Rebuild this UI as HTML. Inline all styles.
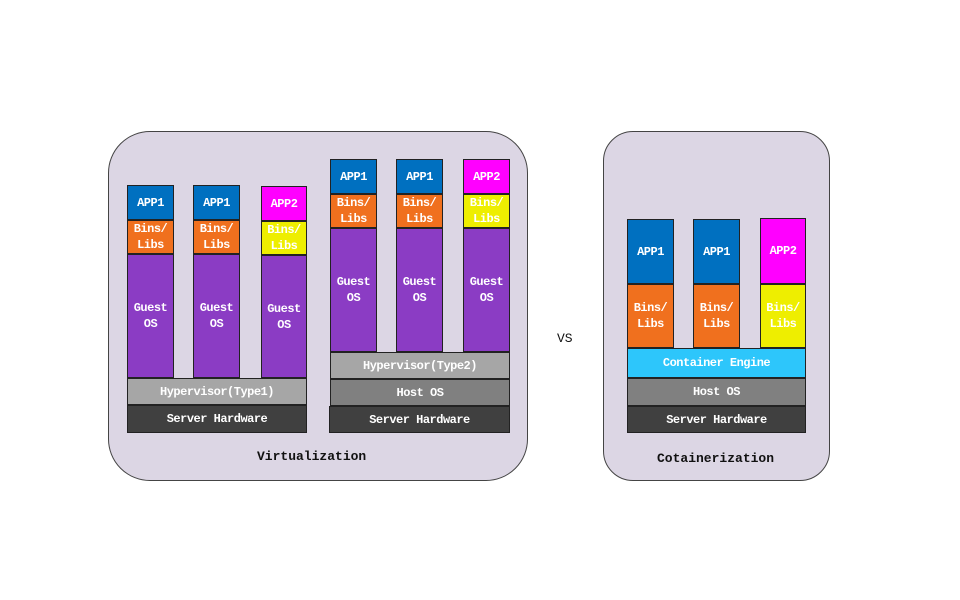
<!DOCTYPE html>
<html><head><meta charset="utf-8"><style>
body{margin:0;width:960px;height:600px;background:#fff;position:relative;overflow:hidden;font-family:"Liberation Mono","Noto Sans CJK SC",monospace;}
.b{position:absolute;box-sizing:border-box;}
.r{position:absolute;box-sizing:border-box;border:1px solid #222;color:#fff;font-weight:bold;font-size:12px;line-height:16px;display:flex;align-items:center;justify-content:center;text-align:center;letter-spacing:-0.5px;}
.bl{background:#0070c0}.or{background:#f0701e}.pu{background:#8b3cc4}.mg{background:#ff00ff}.ye{background:#eeee00}
.hv{background:#a6a6a6}.ho{background:#808080}.sv{background:#404040}.ce{background:#2dc6fb}
.t{position:absolute;font-size:13px;font-weight:bold;color:#111;}
</style></head><body>
<div class="b" style="left:108px;top:131px;width:420px;height:350px;background:#dcd6e4;border:1px solid #444;border-radius:42px;"></div>
<div class="b" style="left:603px;top:131px;width:227px;height:350px;background:#dcd6e4;border:1px solid #444;border-radius:30px;"></div>

<!-- Type1 -->
<div class="r bl" style="left:127px;top:185px;width:47px;height:35px">APP1</div>
<div class="r or" style="left:127px;top:220px;width:47px;height:34px">Bins/<br>Libs</div>
<div class="r pu" style="left:127px;top:254px;width:47px;height:124px">Guest<br>OS</div>
<div class="r bl" style="left:193px;top:185px;width:47px;height:35px">APP1</div>
<div class="r or" style="left:193px;top:220px;width:47px;height:34px">Bins/<br>Libs</div>
<div class="r pu" style="left:193px;top:254px;width:47px;height:124px">Guest<br>OS</div>
<div class="r mg" style="left:261px;top:186px;width:46px;height:35px">APP2</div>
<div class="r ye" style="left:261px;top:221px;width:46px;height:34px">Bins/<br>Libs</div>
<div class="r pu" style="left:261px;top:255px;width:46px;height:123px">Guest<br>OS</div>
<div class="r hv" style="left:127px;top:378px;width:180px;height:27px">Hypervisor(Type1)</div>
<div class="r sv" style="left:127px;top:405px;width:180px;height:28px">Server Hardware</div>

<!-- Type2 -->
<div class="r bl" style="left:330px;top:159px;width:47px;height:35px">APP1</div>
<div class="r or" style="left:330px;top:194px;width:47px;height:34px">Bins/<br>Libs</div>
<div class="r pu" style="left:330px;top:228px;width:47px;height:124px">Guest<br>OS</div>
<div class="r bl" style="left:396px;top:159px;width:47px;height:35px">APP1</div>
<div class="r or" style="left:396px;top:194px;width:47px;height:34px">Bins/<br>Libs</div>
<div class="r pu" style="left:396px;top:228px;width:47px;height:124px">Guest<br>OS</div>
<div class="r mg" style="left:463px;top:159px;width:47px;height:35px">APP2</div>
<div class="r ye" style="left:463px;top:194px;width:47px;height:34px">Bins/<br>Libs</div>
<div class="r pu" style="left:463px;top:228px;width:47px;height:124px">Guest<br>OS</div>
<div class="r hv" style="left:330px;top:352px;width:180px;height:27px">Hypervisor(Type2)</div>
<div class="r ho" style="left:330px;top:379px;width:180px;height:27px">Host OS</div>
<div class="r sv" style="left:329px;top:406px;width:181px;height:27px">Server Hardware</div>
<div class="t" style="left:257px;top:449px;">Virtualization</div>

<div class="t" style="left:557px;top:331px;font-weight:normal;">VS</div>

<!-- Container -->
<div class="r bl" style="left:627px;top:219px;width:47px;height:65px">APP1</div>
<div class="r or" style="left:627px;top:284px;width:47px;height:64px">Bins/<br>Libs</div>
<div class="r bl" style="left:693px;top:219px;width:47px;height:65px">APP1</div>
<div class="r or" style="left:693px;top:284px;width:47px;height:64px">Bins/<br>Libs</div>
<div class="r mg" style="left:760px;top:218px;width:46px;height:66px">APP2</div>
<div class="r ye" style="left:760px;top:284px;width:46px;height:64px">Bins/<br>Libs</div>
<div class="r ce" style="left:627px;top:348px;width:179px;height:30px">Container Engine</div>
<div class="r ho" style="left:627px;top:378px;width:179px;height:28px">Host OS</div>
<div class="r sv" style="left:627px;top:406px;width:179px;height:27px">Server Hardware</div>
<div class="t" style="left:657px;top:451px;">Cotainerization</div>
</body></html>
